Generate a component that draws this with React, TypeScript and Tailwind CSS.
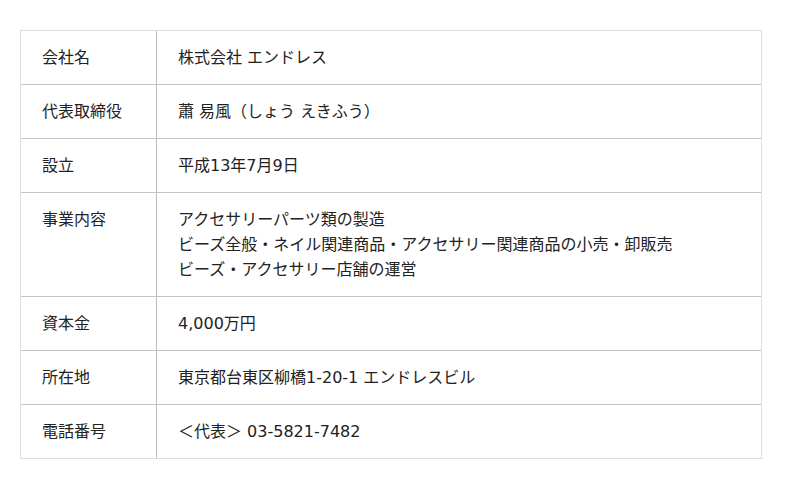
const rows: { label: string; lines: string[] }[] = [
  { label: '会社名', lines: ['株式会社 エンドレス'] },
  { label: '代表取締役', lines: ['蕭 易風（しょう えきふう）'] },
  { label: '設立', lines: ['平成13年7月9日'] },
  {
    label: '事業内容',
    lines: [
      'アクセサリーパーツ類の製造',
      'ビーズ全般・ネイル関連商品・アクセサリー関連商品の小売・卸販売',
      'ビーズ・アクセサリー店舗の運営',
    ],
  },
  { label: '資本金', lines: ['4,000万円'] },
  { label: '所在地', lines: ['東京都台東区柳橋1-20-1 エンドレスビル'] },
  { label: '電話番号', lines: ['＜代表＞ 03-5821-7482'] },
];

export default function App() {
  return (
    <div className="min-h-[489px] w-full bg-white pt-[30px] pl-[20px] font-['DejaVu_Sans','Noto_Sans_CJK_JP',sans-serif] text-[16px] leading-[25px] text-[#222]">
      <div className="w-[742px] border border-[#dcdcdc]">
        {rows.map((row, i) => (
          <div
            key={row.label}
            className={`flex ${i < rows.length - 1 ? 'border-b border-[#c4c4c4]' : ''}`}
          >
            <div className="w-[136px] shrink-0 border-r border-[#bdbdbd] px-[21px] py-[14px]">
              {row.label}
            </div>
            <div className="flex-1 px-[21px] py-[14px]">
              {row.lines.map((line) => (
                <div key={line}>{line}</div>
              ))}
            </div>
          </div>
        ))}
      </div>
    </div>
  );
}
